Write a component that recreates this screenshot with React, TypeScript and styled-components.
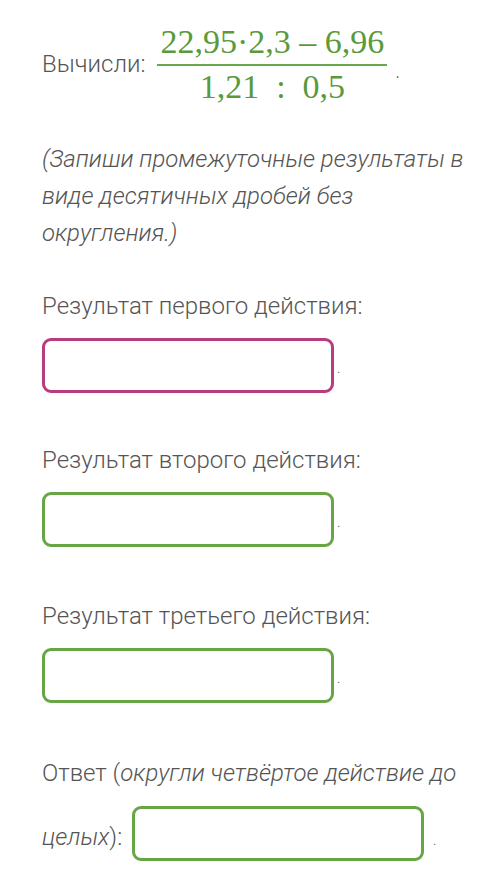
import React from "react";
import styled, { createGlobalStyle } from "styled-components";

const Global = createGlobalStyle`
  html, body { margin: 0; padding: 0; background: #ffffff; }
  body { font-family: "Roboto Light", Roboto, "Noto Sans", sans-serif; }
`;

const Page = styled.div`
  width: 480px;
  height: 892px;
  box-sizing: border-box;
  padding: 22px 8px 0 42px;
  color: #555555;
  font-family: "Roboto Light", Roboto, "Noto Sans", sans-serif;
  font-weight: 300;
  font-size: 24px;
  line-height: 37px;
`;

const TaskRow = styled.div`
  display: flex;
  align-items: center;
  gap: 12px;
`;

const Fraction = styled.div`
  display: inline-flex;
  flex-direction: column;
  align-items: center;
  font-family: "Liberation Serif", "Times New Roman", serif;
  font-weight: 400;
  font-size: 34px;
  line-height: 40px;
  color: #5a9a3c;
`;

const Numerator = styled.span`
  padding: 0 3px 2px;
  border-bottom: 2px solid #6aa84f;
  white-space: pre;
`;

const Denominator = styled.span`
  padding-top: 1px;
  white-space: pre;
`;

const Dot = styled.span`
  align-self: center;
  margin-top: 14px;
  margin-left: -4px;
  font-size: 20px;
`;

const Note = styled.p`
  margin: 34px 0 0;
  font-style: italic;
`;

const Label = styled.p<{ $top: number }>`
  margin: ${(p) => p.$top}px 0 0;
`;

const InputLine = styled.div`
  margin-top: 12px;
  line-height: 56px;
`;

const Box = styled.input<{ $tone: "pink" | "green" }>`
  box-sizing: border-box;
  width: 292px;
  height: 55px;
  border: 3px solid ${(p) => (p.$tone === "pink" ? "#b93c7f" : "#67a545")};
  border-radius: 9px;
  background: #ffffff;
  font: inherit;
  vertical-align: baseline;
  outline: none;
  padding: 0 10px;
`;

const AnswerBox = styled(Box)`
  margin-left: 10px;
  vertical-align: 4px;
`;

const SmallDot = styled.span`
  font-size: 14px;
  margin-left: 3px;
`;

const Answer = styled.p`
  margin: 35px 0 0;
  line-height: 64px;
`;

const Em = styled.em`
  font-style: italic;
`;

export default function App() {
  return (
    <>
      <Global />
      <Page>
        <TaskRow>
          <span>Вычисли:</span>
          <Fraction>
            <Numerator>{"22,95·2,3 – 6,96"}</Numerator>
            <Denominator>{"1,21\u2002:\u20020,5"}</Denominator>
          </Fraction>
          <Dot>.</Dot>
        </TaskRow>
        <Note>
          (Запиши промежуточные результаты в виде десятичных дробей без округления.)
        </Note>
        <Label $top={36}>Результат первого действия:</Label>
        <InputLine>
          <Box $tone="pink" />
          <SmallDot>.</SmallDot>
        </InputLine>
        <Label $top={46}>Результат второго действия:</Label>
        <InputLine>
          <Box $tone="green" />
          <SmallDot>.</SmallDot>
        </InputLine>
        <Label $top={48}>Результат третьего действия:</Label>
        <InputLine>
          <Box $tone="green" />
          <SmallDot>.</SmallDot>
        </InputLine>
        <Answer>
          Ответ (<Em>округли четвёртое действие до целых</Em>):
          <AnswerBox $tone="green" /> <SmallDot>.</SmallDot>
        </Answer>
      </Page>
    </>
  );
}
